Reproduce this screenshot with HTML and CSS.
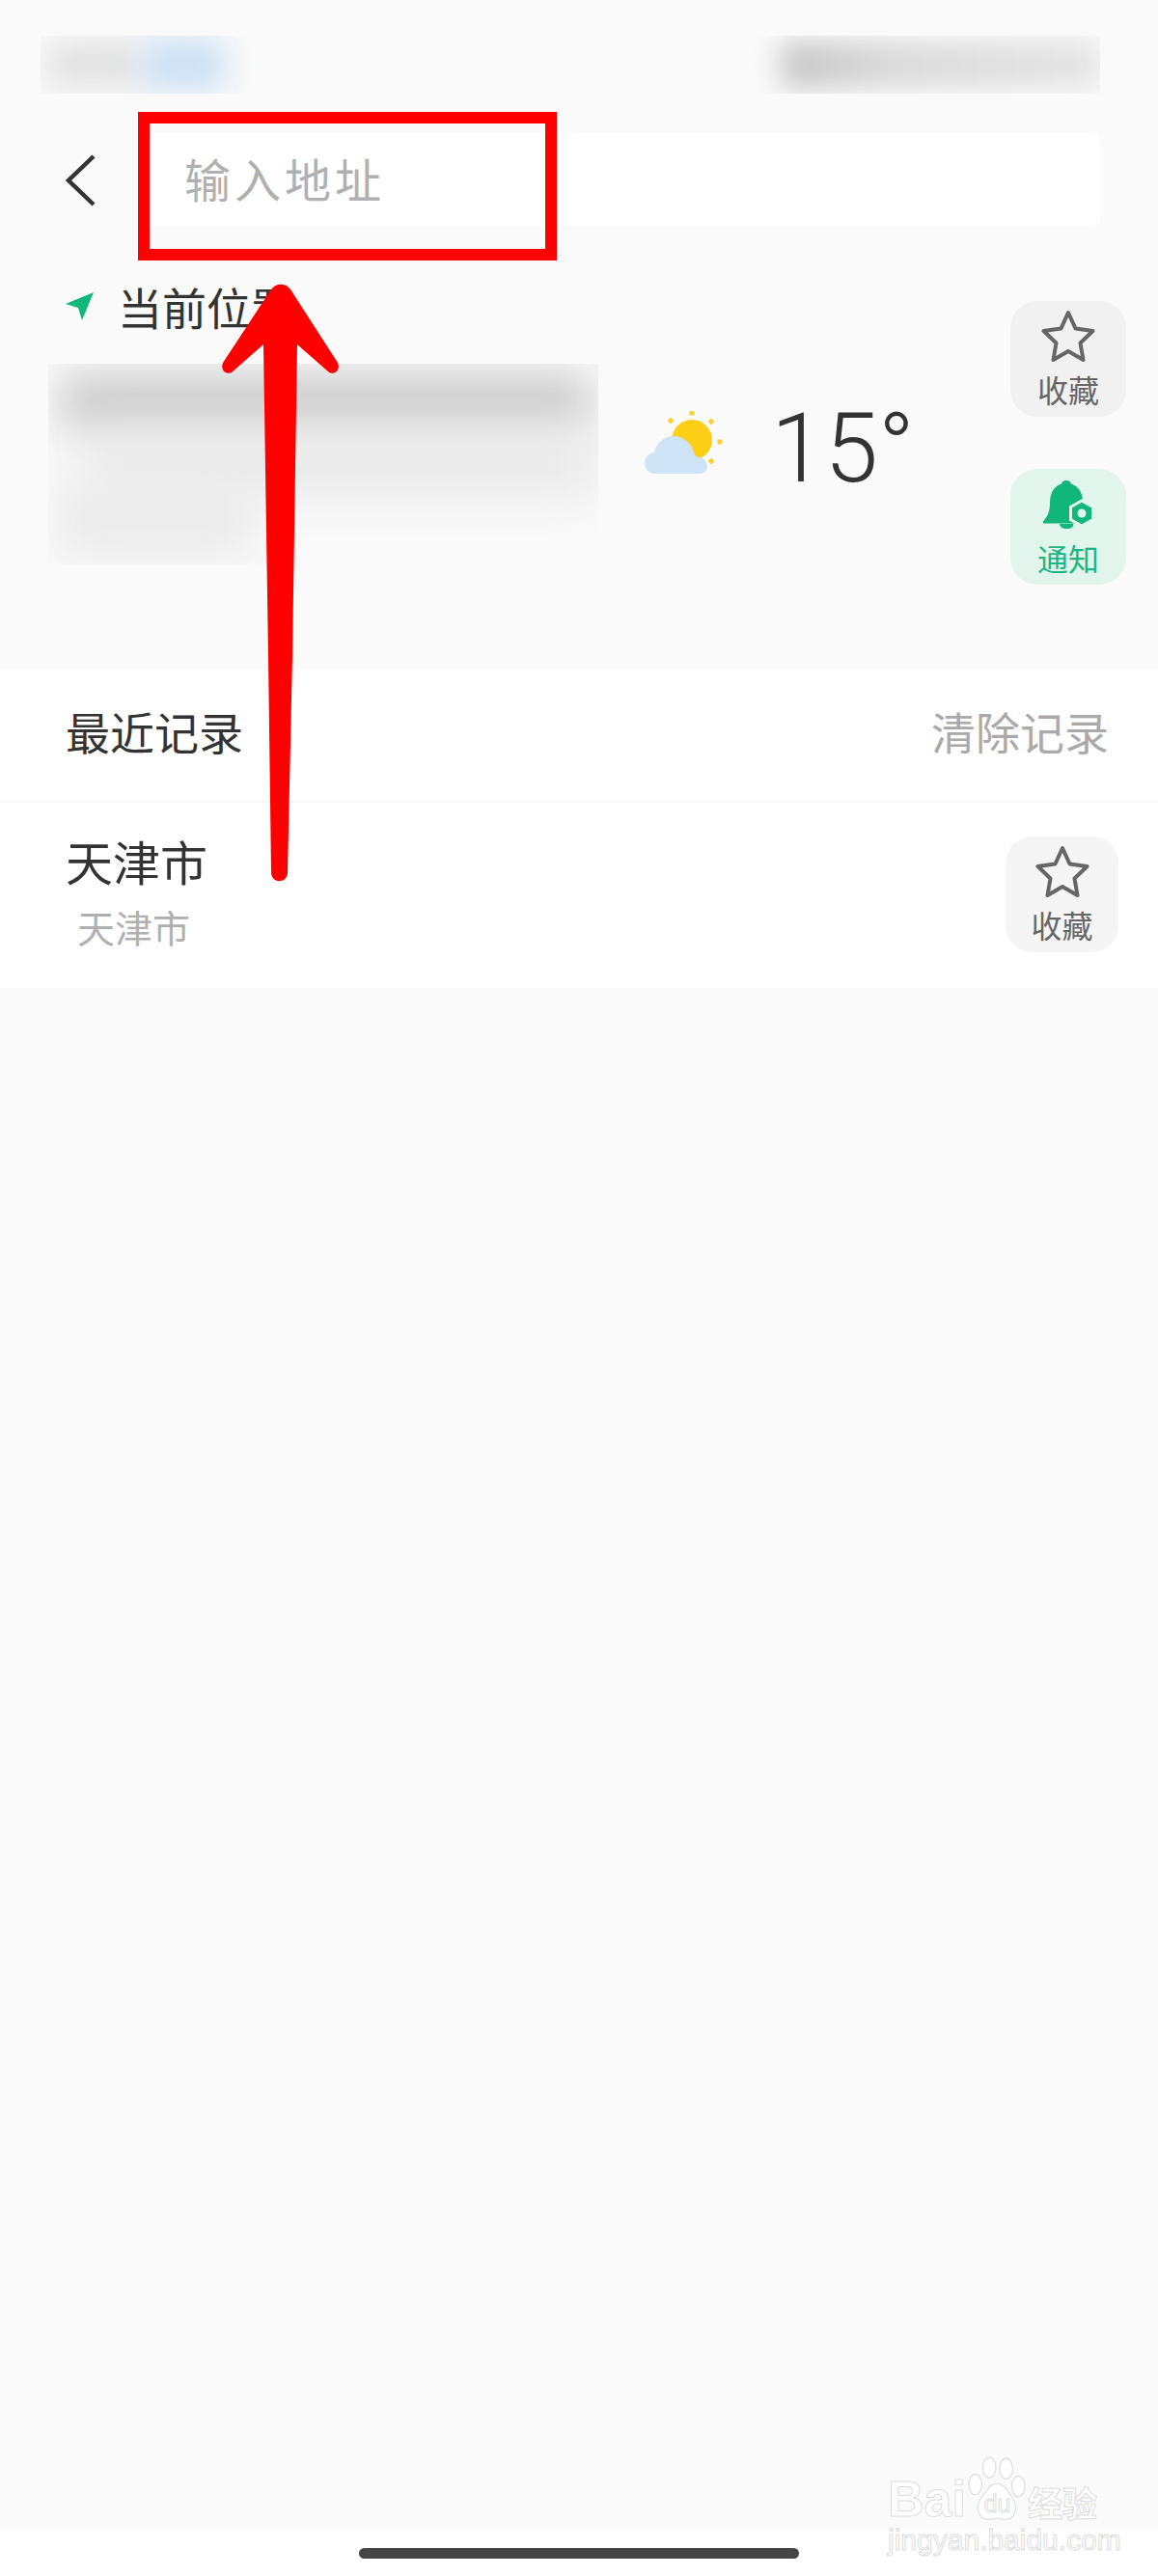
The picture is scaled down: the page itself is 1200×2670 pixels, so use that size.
FILE: index.html
```html
<!DOCTYPE html>
<html>
	<head>
		<meta charset="UTF-8">
		<title>输入地址</title>
		<link rel="stylesheet" href="styles.css">
	</head>
	<body>
		<div id="box">
			<!--status-->
			<div class="status">
				<div class="status-left"><div class="smear-gray"></div><div class="smear-blue"></div></div>
				<div class="status-right"><div class="smear-bar"></div></div>
			</div>
			<!--search-->
			<div class="search">
				<svg class="back" viewBox="0 0 31 54"><path d="M29 2 3 27l26 25" fill="none" stroke="#333" stroke-width="4.5"/></svg>
				<div class="input">输入地址</div>
			</div>
			<!--location-->
			<div class="location">
				<div class="loc-main">
					<div class="loc-label">
						<svg class="nav" viewBox="0 0 29 29"><path d="M29 0 0 12l13 4 4 13z" fill="#10b67a"/></svg>
						<span>当前位置</span>
					</div>
					<div class="loc-blur">
						<div class="blur-a"></div>
						<div class="blur-b"></div>
						<div class="blur-c"></div>
					</div>
				</div>
				<div class="weather">
					<svg class="weather-icon" viewBox="0 0 82 65">
						<circle cx="49" cy="30" r="21" fill="#fdd017"/>
						<g fill="#fbd13a">
							<rect x="46.500" y="-0.500" width="5" height="5"/>
							<rect x="24.500" y="7.500" width="5" height="5" transform="rotate(45 27 10)"/>
							<rect x="66.500" y="8.500" width="5" height="5" transform="rotate(45 69 11)"/>
							<rect x="75.500" y="29.500" width="5" height="5"/>
							<rect x="66.500" y="49.500" width="5" height="5" transform="rotate(45 69 52)"/>
						</g>
						<path d="M12 65C4 65 0 60 0 54c0-6 4-10 10-11 2-10 11-17 20-17 11 0 19 8 21 17 1 4 3 4 6 5 5 1 8 6 8 9 0 5-4 8-8 8z" fill="#cfe3f7"/>
					</svg>
					<div class="temp">15°</div>
				</div>
				<div class="actions">
					<div class="act">
						<svg class="star" viewBox="0 0 56 54"><path d="M28 3l7.500 16.500 18 2.500-13 12.500 3 17.500L28 43l-15.500 9 3-17.500L2.500 22l18-2.500z" fill="none" stroke="#666" stroke-width="4" stroke-linejoin="round"/></svg>
						<div class="act-text">收藏</div>
					</div>
					<div class="act act-green">
						<svg class="bell" viewBox="0 0 52 50">
							<path d="M24 0c3 0 4.500 1.500 5 3.500 8 2.500 12 10 12 18v10l-8 13H1c-1 0-1.500-1-1-2 4-5 7-9 7-19C7 13 11 6 19 3.500 19.500 1.500 21 0 24 0z" fill="#10b67a"/>
							<path d="M17 45h14c1 3-2 5-7 5-4 0-7-2-7-5z" fill="#10b67a"/>
							<path d="M40 21l11.500 6.500v13L40 47l-11.500-6.500v-13z" fill="#10b67a" stroke="#e2f5ed" stroke-width="3"/>
							<circle cx="40" cy="34" r="4.500" fill="#e2f5ed"/>
						</svg>
						<div class="act-text">通知</div>
					</div>
				</div>
			</div>
			<!--recent-->
			<div class="recent">
				<div class="recent-head">
					<span>最近记录</span>
					<span class="clear">清除记录</span>
				</div>
				<div class="recent-item">
					<div class="place">
						<div class="place-name">天津市</div>
						<div class="place-sub">天津市</div>
					</div>
					<div class="act act-light">
						<svg class="star" viewBox="0 0 56 54"><path d="M28 3l7.500 16.500 18 2.500-13 12.500 3 17.500L28 43l-15.500 9 3-17.500L2.500 22l18-2.500z" fill="none" stroke="#666" stroke-width="4" stroke-linejoin="round"/></svg>
						<div class="act-text">收藏</div>
					</div>
				</div>
			</div>
			<div class="empty"></div>
			<!--foot-->
			<div class="foot"><div class="home-bar"></div></div>

			<!--watermark-->
			<div class="mark">
				<div class="mark-top">
					<span class="mark-bai">Bai</span>
					<svg class="paw" viewBox="0 0 62 70">
						<g fill="#fff" stroke="#ddd" stroke-width="1.200">
							<ellipse cx="8" cy="29" rx="7" ry="11"/>
							<ellipse cx="23" cy="11" rx="7" ry="11"/>
							<ellipse cx="41" cy="12" rx="7" ry="11"/>
							<ellipse cx="54" cy="31" rx="7" ry="11"/>
							<path d="M31 28c8 0 11 8 16 14 5 7 6 13 2 20-3 5-10 5-18 3-8 2-15 2-18-3-4-7-3-13 2-20 5-6 8-14 16-14z"/>
						</g>
						<text x="17" y="59" class="paw-du">du</text>
					</svg>
					<span class="mark-cn">经验</span>
				</div>
				<div class="mark-url">jingyan.baidu.com</div>
			</div>

			<!--red annotation-->
			<svg class="note" viewBox="0 0 1200 2670">
				<rect x="149" y="122" width="422" height="142" fill="none" stroke="#f00" stroke-width="12"/>
				<path d="M281 300c5-7 15-7 20 0l49 76c3 7-3 13-9 10l-33-29 -5 323-5 225c-1 11-16 11-17 0l-3-225-5-323-33 29c-6 3-12-3-9-10z" fill="#f00"/>
			</svg>
		</div>
	</body>
</html>
```

FILE: styles.css
```css
body,div,span{
	margin: 0px;
	padding: 0px;
}
body{
	background-color: #fafafa;
	font-family: "Noto Sans CJK SC", "Noto Sans", sans-serif;
	color: #333;
}
#box{
	width: 1200px;
	height: 2670px;
	display: flex;
	flex-direction: column;
	position: relative;
	overflow: hidden;
}
/*status start*/
.status{
	height: 60px;
	padding: 37px 60px 0 42px;
	display: flex;
	justify-content: space-between;
}
.status-left,.status-right{
	height: 60px;
	display: flex;
	overflow: hidden;
}
.status-left{
	width: 230px;
}
.status-right{
	width: 375px;
}
.smear-gray{
	margin: 6px 0 6px 6px;
	width: 100px;
	height: 48px;
	background-color: #e2e2e2;
	filter: blur(16px);
}
.smear-blue{
	margin: 4px 0;
	width: 85px;
	height: 52px;
	background-color: #cbdff3;
	filter: blur(16px);
}
.smear-bar{
	margin: 6px 0 6px 45px;
	width: 350px;
	height: 48px;
	background: linear-gradient(90deg, #c4c4c4 0%, #d9d9d9 35%, #e4e4e4 100%);
	filter: blur(14px);
}
/*status end*/

/*search start*/
.search{
	margin-top: 41px;
	display: flex;
	align-items: center;
}
.back{
	margin-left: 68px;
	width: 31px;
	height: 54px;
}
.input{
	margin: 0 60px 0 52px;
	padding-left: 40px;
	flex: 1;
	height: 97px;
	font-size: 48px;
	letter-spacing: 4px;
	line-height: 93px;
	color: #b0b0b0;
	background-color: #fff;
	border-radius: 8px;
}
/*search end*/

/*location start*/
.location{
	height: 458px;
	padding: 0 33px 0 50px;
	display: flex;
	align-items: flex-start;
}
.loc-main{
	width: 570px;
}
.loc-label{
	margin: 57px 0 0 18px;
	height: 50px;
	font-size: 46px;
	line-height: 50px;
	display: flex;
	align-items: center;
	gap: 25px;
}
.nav{
	width: 29px;
	height: 29px;
}
.loc-blur{
	margin-top: 35px;
	height: 208px;
	overflow: hidden;
}
.blur-a{
	margin: 10px 0 0 12px;
	width: 550px;
	height: 60px;
	background-color: #cccccc;
	filter: blur(22px);
}
.blur-b{
	margin: 0 0 0 40px;
	width: 530px;
	height: 68px;
	background-color: #e9e9e9;
	filter: blur(24px);
}
.blur-c{
	margin: -14px 0 0 10px;
	width: 200px;
	height: 76px;
	background-color: #ebebeb;
	filter: blur(20px);
}
.weather{
	margin: 183px 0 0 48px;
	display: flex;
	align-items: flex-start;
	gap: 49px;
}
.weather-icon{
	margin-top: 8px;
	width: 82px;
	height: 65px;
}
.temp{
	font-family: "Roboto", sans-serif;
	font-weight: 300;
	font-size: 100px;
	line-height: 94px;
	color: #333;
}
.actions{
	margin-left: auto;
	padding-top: 77px;
	display: flex;
	flex-direction: column;
	gap: 54px;
}
.act{
	width: 120px;
	height: 120px;
	padding-top: 9px;
	box-sizing: border-box;
	background-color: #f1f1f1;
	border-radius: 28px;
	display: flex;
	flex-direction: column;
	align-items: center;
}
.star{
	width: 56px;
	height: 54px;
}
.bell{
	margin-top: 3px;
	width: 52px;
	height: 50px;
}
.act-text{
	margin-top: 5px;
	font-size: 32px;
	line-height: 46px;
	color: #666;
}
.act-green{
	background-color: #e2f5ed;
}
.act-green .act-text{
	margin-top: 7px;
	color: #1db584;
}
.act-light{
	width: 117px;
	background-color: #f5f5f5;
}
/*location end*/

/*recent start*/
.recent{
	background-color: #fff;
}
.recent-head{
	height: 139px;
	padding: 0 51px 10px 68px;
	box-sizing: border-box;
	font-size: 46px;
	display: flex;
	justify-content: space-between;
	align-items: center;
	border-bottom: 2px solid #f6f6f6;
}
.clear{
	color: #aaa;
}
.recent-item{
	height: 192px;
	padding: 35px 41px 0 68px;
	box-sizing: border-box;
	display: flex;
	justify-content: space-between;
}
.place-name{
	margin-top: -5px;
	font-size: 49px;
	line-height: 60px;
}
.place-sub{
	margin: 13px 0 0 12px;
	font-size: 39px;
	line-height: 50px;
	color: #b0b0b0;
}
/*recent end*/

.empty{
	flex: 1;
}
/*foot start*/
.foot{
	height: 48px;
	padding-top: 19px;
	box-sizing: border-box;
	background-color: #fff;
}
.home-bar{
	margin: 0 auto;
	width: 456px;
	height: 11px;
	background-color: #464646;
	border-radius: 6px;
}
/*foot end*/

/*watermark*/
.mark{
	position: absolute;
	left: 920px;
	top: 2542px;
	width: 220px;
}
.mark-top{
	height: 74px;
	display: flex;
	align-items: flex-end;
}
.mark-bai,.mark-cn,.mark-url,.paw-du{
	color: #fff;
	-webkit-text-stroke: 1px #dcdcdc;
}
.mark-bai{
	font-family: "Liberation Sans", sans-serif;
	font-weight: bold;
	font-size: 52px;
	line-height: 52px;
}
.paw{
	margin-left: 2px;
	width: 60px;
	height: 70px;
}
.paw-du{
	font-family: "Liberation Sans", sans-serif;
	font-size: 26px;
	fill: #fff;
	stroke: #dcdcdc;
	stroke-width: 1px;
}
.mark-cn{
	margin-left: 2px;
	font-weight: bold;
	font-size: 36px;
	line-height: 46px;
}
.mark-url{
	font-family: "Liberation Sans", sans-serif;
	font-size: 30px;
	line-height: 34px;
	white-space: nowrap;
}

/*red annotation on top of everything*/
.note{
	position: absolute;
	left: 0;
	top: 0;
	width: 1200px;
	height: 2670px;
}
```
